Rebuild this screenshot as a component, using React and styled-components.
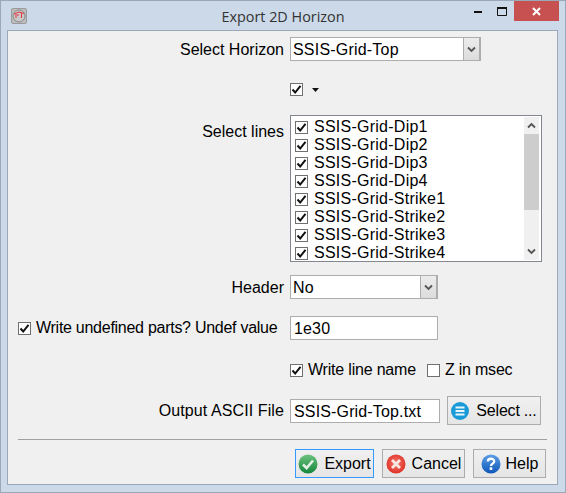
import React from 'react';
import styled, { createGlobalStyle } from 'styled-components';

const Global = createGlobalStyle`
  html, body { margin: 0; padding: 0; }
  body {
    width: 566px;
    height: 493px;
    overflow: hidden;
    background: #cbd9e8;
    font-family: "Liberation Sans", Arial, sans-serif;
    font-size: 16px;
    color: #000;
  }
`;

const Win = styled.div`
  box-sizing: border-box;
  width: 566px;
  height: 493px;
  display: flex;
  flex-direction: column;
  background: #cbd9e8;
  border: 1px solid #9aa8b8;
  padding: 0 7px 7px 6px;
`;

const TitleBar = styled.div`
  height: 29px;
  flex: none;
  margin: 0 -7px 0 -6px;
  display: grid;
  grid-template-columns: 1fr auto 1fr;
  align-items: start;
`;

const AppIcon = styled.div`
  width: 14px;
  height: 14px;
  margin: 7px 0 0 10px;
  border: 1px solid #9a9a9a;
  border-radius: 2px;
  background: #bdbdbd;
  display: flex;
`;

const Title = styled.div`
  font-family: "Open Sans", "Noto Sans", sans-serif;
  font-size: 14.4px;
  line-height: 18px;
  padding-top: 7px;
  color: #333;
`;

const Controls = styled.div`
  display: flex;
  justify-content: flex-end;
  align-items: flex-start;
  padding-right: 6px;
`;

const Ctl = styled.div`
  width: ${(p) => p.$w}px;
  height: 20px;
  display: flex;
  align-items: center;
  justify-content: center;
  background: ${(p) => p.$bg || 'transparent'};
`;

const Client = styled.div`
  flex: 1;
  display: flex;
  flex-direction: column;
  background: #f0f0f0;
  border: 1px solid #9aa8b8;
  padding-top: 6px;
`;

const Row = styled.div`
  display: grid;
  grid-template-columns: 276px 1fr;
  column-gap: 6px;
  align-items: ${(p) => p.$align || 'center'};
  height: ${(p) => p.$h}px;
  margin-top: ${(p) => p.$mt || 0}px;
`;

const Label = styled.div`
  text-align: right;
  padding-top: ${(p) => p.$pt || 1}px;
  letter-spacing: ${(p) => p.$ls || 0}px;
  white-space: nowrap;
`;

const Field = styled.div`
  display: flex;
  align-items: center;
  gap: ${(p) => p.$gap || 0}px;
`;

const Combo = styled.div`
  box-sizing: border-box;
  width: ${(p) => p.$w}px;
  height: 24px;
  display: flex;
  background: #fff;
  border: 1px solid #adadad;
`;

const ComboText = styled.div`
  flex: 1;
  padding-left: 2px;
  line-height: 24px;
  letter-spacing: 0.2px;
`;

const ComboBtn = styled.div`
  box-sizing: border-box;
  width: 17px;
  display: flex;
  align-items: center;
  justify-content: center;
  background: linear-gradient(#ececec, #dcdcdc);
  border-left: 1px solid #adadad;
  border-right: 1px solid #adadad;
`;

const Box = styled.div`
  box-sizing: border-box;
  flex: none;
  width: 13px;
  height: 13px;
  background: #fff;
  border: 1px solid #707070;
  display: flex;
  align-items: center;
  justify-content: center;
`;

const Check = styled.label`
  display: inline-flex;
  align-items: center;
  gap: 5px;
  white-space: nowrap;
  letter-spacing: -0.2px;
`;

const UndefCheck = styled(Check)`
  margin-left: 10px;
  letter-spacing: -0.27px;
`;

const ListFrame = styled.div`
  box-sizing: border-box;
  width: 252px;
  height: 147px;
  display: flex;
  background: #fff;
  border: 1px solid #828790;
`;

const Items = styled.div`
  flex: 1;
  overflow: hidden;
  padding: 2px 0 0 4px;
`;

const Item = styled.div`
  height: 18px;
  display: flex;
  align-items: center;
  gap: 6px;
  letter-spacing: 0.25px;
  white-space: nowrap;
`;

const Scroll = styled.div`
  width: 15px;
  margin: 1px 2px 1px 0;
  display: flex;
  flex-direction: column;
  background: #f0f0f0;
`;

const ScrollArrow = styled.div`
  height: 17px;
  flex: none;
  display: flex;
  align-items: center;
  justify-content: center;
`;

const Thumb = styled.div`
  height: 76px;
  flex: none;
  background: #cdcdcd;
`;

const ScrollTrack = styled.div`
  flex: 1;
`;

const Input = styled.div`
  box-sizing: border-box;
  width: ${(p) => p.$w}px;
  height: 24px;
  padding-left: 3px;
  line-height: 24px;
  background: #fff;
  border: 1px solid #adadad;
  letter-spacing: 0.15px;
`;

const Sep = styled.div`
  height: 1px;
  background: #a0a0a0;
  margin: 14px 10px 0 10px;
`;

const Footer = styled.div`
  display: flex;
  justify-content: flex-end;
  gap: 8px;
  margin-top: 9px;
  padding-right: 11px;
`;

const Btn = styled.div`
  box-sizing: border-box;
  width: ${(p) => p.$w}px;
  height: 29px;
  display: flex;
  align-items: center;
  justify-content: center;
  gap: ${(p) => p.$gap || 6}px;
  border: 1px solid ${(p) => (p.$focus ? '#3399ff' : '#acacac')};
  background: linear-gradient(#f0f0f0, #e5e5e5);
  white-space: nowrap;
`;

const BtnText = styled.span`
  padding-top: 1px;
  letter-spacing: ${(p) => p.$ls || 0}px;
`;

const Tick = () => (
  <svg width="11" height="11" viewBox="0 0 11 11">
    <path d="M1.5 5.5 L4.2 8.5 L9.5 1.8" fill="none" stroke="#111" strokeWidth="2" />
  </svg>
);

const CheckBox = ({ on = true }) => <Box>{on && <Tick />}</Box>;

const Chevron = ({ up, color = '#555' }) => (
  <svg width="9" height="7" viewBox="0 0 9 7">
    <path d={up ? 'M1 5.5 L4.5 2 L8 5.5' : 'M1 1.5 L4.5 5 L8 1.5'} fill="none" stroke={color} strokeWidth="1.8" />
  </svg>
);

const Logo = () => (
  <svg width="14" height="14" viewBox="0 0 14 14">
    <circle cx="7" cy="7" r="6" fill="#c8c8c8" stroke="#8a8a8a" />
    <path d="M2 5 L7 3 L12 4.5 M4 5 L4 9 M9.5 4 L9.5 9 M6 5 L6 7" fill="none" stroke="#e8303a" strokeWidth="1" />
  </svg>
);

const OkIcon = () => (
  <svg width="20" height="20" viewBox="0 0 20 20">
    <defs>
      <linearGradient id="ok" x1="0" y1="0" x2="0" y2="1">
        <stop offset="0" stopColor="#6cc27e" />
        <stop offset="1" stopColor="#14863c" />
      </linearGradient>
    </defs>
    <circle cx="10" cy="10" r="9.5" fill="url(#ok)" />
    <path d="M5 10.5 L8.6 14 L15 6.5" fill="none" stroke="#e4efe6" strokeWidth="2.6" />
  </svg>
);

const CancelIcon = () => (
  <svg width="20" height="20" viewBox="0 0 20 20">
    <defs>
      <radialGradient id="no" cx="0.5" cy="0.45" r="0.6">
        <stop offset="0" stopColor="#f7796c" />
        <stop offset="1" stopColor="#dc2a22" />
      </radialGradient>
    </defs>
    <circle cx="10" cy="10" r="9.5" fill="url(#no)" />
    <path d="M6 6 L14 14 M14 6 L6 14" stroke="#f6e9e4" strokeWidth="2.8" />
  </svg>
);

const HelpIcon = () => (
  <svg width="20" height="20" viewBox="0 0 20 20">
    <defs>
      <linearGradient id="hp" x1="0" y1="0" x2="0" y2="1">
        <stop offset="0" stopColor="#5d9ee6" />
        <stop offset="1" stopColor="#0b56b8" />
      </linearGradient>
    </defs>
    <circle cx="10" cy="10" r="9.5" fill="url(#hp)" />
    <path d="M6.8 7.4 C6.8 3.9 13.2 3.9 13.2 7.3 C13.2 9.7 10 9.6 10 12" fill="none" stroke="#fff" strokeWidth="2.3" />
    <rect x="8.7" y="13.3" width="2.6" height="2.6" fill="#fff" />
  </svg>
);

const ListIcon = () => (
  <svg width="18" height="18" viewBox="0 0 18 18">
    <circle cx="9" cy="9" r="9" fill="#1a9ad6" />
    <path d="M4.5 5.5 H13.5 M4.5 9 H13.5 M4.5 12.5 H13.5" stroke="#e8f6fc" strokeWidth="2" />
  </svg>
);

const lines = [
  'SSIS-Grid-Dip1',
  'SSIS-Grid-Dip2',
  'SSIS-Grid-Dip3',
  'SSIS-Grid-Dip4',
  'SSIS-Grid-Strike1',
  'SSIS-Grid-Strike2',
  'SSIS-Grid-Strike3',
  'SSIS-Grid-Strike4',
];

export default function App() {
  return (
    <>
      <Global />
      <Win>
        <TitleBar>
          <AppIcon><Logo /></AppIcon>
          <Title>Export 2D Horizon</Title>
          <Controls>
            <Ctl $w={22}>
              <svg width="8" height="3" viewBox="0 0 8 3"><rect width="8" height="2" y="1" fill="#111" /></svg>
            </Ctl>
            <Ctl $w={25}>
              <svg width="10" height="9" viewBox="0 0 10 9"><path d="M0.5 1.5 H9.5 V8.5 H0.5 Z" fill="none" stroke="#111" /><rect width="10" height="2" fill="#111" /></svg>
            </Ctl>
            <Ctl $w={45} $bg="#c75050">
              <svg width="9" height="9" viewBox="0 0 9 9"><path d="M1 1 L8 8 M8 1 L1 8" stroke="#fff" strokeWidth="2" /></svg>
            </Ctl>
          </Controls>
        </TitleBar>
        <Client>
          <Row $h={24}>
            <Label>Select Horizon</Label>
            <Field>
              <Combo $w={191}>
                <ComboText>SSIS-Grid-Top</ComboText>
                <ComboBtn><Chevron /></ComboBtn>
              </Combo>
            </Field>
          </Row>
          <Row $h={13} $mt={22}>
            <span />
            <Field $gap={9}>
              <CheckBox />
              <svg width="7" height="4" viewBox="0 0 7 4"><path d="M0 0 H7 L3.5 4 Z" fill="#111" /></svg>
            </Field>
          </Row>
          <Row $h={147} $mt={19} $align="start">
            <Label $pt={8}>Select lines</Label>
            <ListFrame>
              <Items>
                {lines.map((l) => (
                  <Item key={l}><CheckBox />{l}</Item>
                ))}
              </Items>
              <Scroll>
                <ScrollArrow><Chevron up /></ScrollArrow>
                <Thumb />
                <ScrollTrack />
                <ScrollArrow><Chevron /></ScrollArrow>
              </Scroll>
            </ListFrame>
          </Row>
          <Row $h={24} $mt={13}>
            <Label>Header</Label>
            <Field>
              <Combo $w={148}>
                <ComboText>No</ComboText>
                <ComboBtn><Chevron /></ComboBtn>
              </Combo>
            </Field>
          </Row>
          <Row $h={24} $mt={17}>
            <UndefCheck><CheckBox />Write undefined parts? Undef value</UndefCheck>
            <Input $w={148}>1e30</Input>
          </Row>
          <Row $h={14} $mt={21}>
            <span />
            <Field $gap={11}>
              <Check><CheckBox />Write line name</Check>
              <Check><CheckBox on={false} />Z in msec</Check>
            </Field>
          </Row>
          <Row $h={29} $mt={21}>
            <Label $ls={0.1}>Output ASCII File</Label>
            <Field $gap={7}>
              <Input $w={150}>SSIS-Grid-Top.txt</Input>
              <Btn $w={94} $gap={7}><ListIcon /><BtnText $ls={-0.2}>Select ...</BtnText></Btn>
            </Field>
          </Row>
          <Sep />
          <Footer>
            <Btn $w={79} $focus><OkIcon /><BtnText>Export</BtnText></Btn>
            <Btn $w={83}><CancelIcon /><BtnText>Cancel</BtnText></Btn>
            <Btn $w={73} $gap={5}><HelpIcon /><BtnText>Help</BtnText></Btn>
          </Footer>
        </Client>
      </Win>
    </>
  );
}
